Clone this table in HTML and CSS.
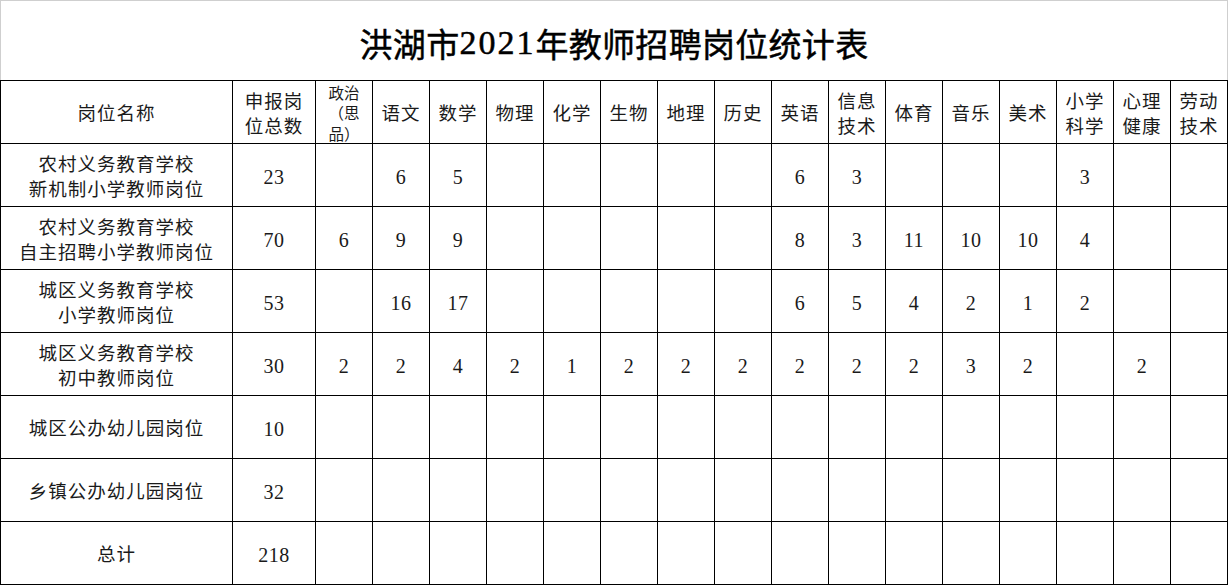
FILE: index.html
```html
<!DOCTYPE html>
<html lang="zh-CN">
<head>
<meta charset="utf-8">
<title>洪湖市2021年教师招聘岗位统计表</title>
<link rel="stylesheet" href="styles.css">
</head>
<body>
<div class="sheet">
  <div class="title">洪湖市<span class="num">2021</span>年教师招聘岗位统计表</div>
  <div class="grid">
    <div class="c">岗位名称</div>
    <div class="c">申报岗<br>位总数</div>
    <div class="c small"><span>政治</span><span>（思</span><span>品）</span></div>
    <div class="c">语文</div>
    <div class="c">数学</div>
    <div class="c">物理</div>
    <div class="c">化学</div>
    <div class="c">生物</div>
    <div class="c">地理</div>
    <div class="c">历史</div>
    <div class="c">英语</div>
    <div class="c">信息<br>技术</div>
    <div class="c">体育</div>
    <div class="c">音乐</div>
    <div class="c">美术</div>
    <div class="c">小学<br>科学</div>
    <div class="c">心理<br>健康</div>
    <div class="c">劳动<br>技术</div>

    <div class="c">农村义务教育学校<br>新机制小学教师岗位</div>
    <div class="c n">23</div><div class="c n"></div><div class="c n">6</div><div class="c n">5</div><div class="c n"></div><div class="c n"></div><div class="c n"></div><div class="c n"></div><div class="c n"></div><div class="c n">6</div><div class="c n">3</div><div class="c n"></div><div class="c n"></div><div class="c n"></div><div class="c n">3</div><div class="c n"></div><div class="c n"></div>

    <div class="c">农村义务教育学校<br>自主招聘小学教师岗位</div>
    <div class="c n">70</div><div class="c n">6</div><div class="c n">9</div><div class="c n">9</div><div class="c n"></div><div class="c n"></div><div class="c n"></div><div class="c n"></div><div class="c n"></div><div class="c n">8</div><div class="c n">3</div><div class="c n">11</div><div class="c n">10</div><div class="c n">10</div><div class="c n">4</div><div class="c n"></div><div class="c n"></div>

    <div class="c">城区义务教育学校<br>小学教师岗位</div>
    <div class="c n">53</div><div class="c n"></div><div class="c n">16</div><div class="c n">17</div><div class="c n"></div><div class="c n"></div><div class="c n"></div><div class="c n"></div><div class="c n"></div><div class="c n">6</div><div class="c n">5</div><div class="c n">4</div><div class="c n">2</div><div class="c n">1</div><div class="c n">2</div><div class="c n"></div><div class="c n"></div>

    <div class="c">城区义务教育学校<br>初中教师岗位</div>
    <div class="c n">30</div><div class="c n">2</div><div class="c n">2</div><div class="c n">4</div><div class="c n">2</div><div class="c n">1</div><div class="c n">2</div><div class="c n">2</div><div class="c n">2</div><div class="c n">2</div><div class="c n">2</div><div class="c n">2</div><div class="c n">3</div><div class="c n">2</div><div class="c n"></div><div class="c n">2</div><div class="c n"></div>

    <div class="c">城区公办幼儿园岗位</div>
    <div class="c n">10</div><div class="c n"></div><div class="c n"></div><div class="c n"></div><div class="c n"></div><div class="c n"></div><div class="c n"></div><div class="c n"></div><div class="c n"></div><div class="c n"></div><div class="c n"></div><div class="c n"></div><div class="c n"></div><div class="c n"></div><div class="c n"></div><div class="c n"></div><div class="c n"></div>

    <div class="c">乡镇公办幼儿园岗位</div>
    <div class="c n">32</div><div class="c n"></div><div class="c n"></div><div class="c n"></div><div class="c n"></div><div class="c n"></div><div class="c n"></div><div class="c n"></div><div class="c n"></div><div class="c n"></div><div class="c n"></div><div class="c n"></div><div class="c n"></div><div class="c n"></div><div class="c n"></div><div class="c n"></div><div class="c n"></div>

    <div class="c">总计</div>
    <div class="c n">218</div><div class="c n"></div><div class="c n"></div><div class="c n"></div><div class="c n"></div><div class="c n"></div><div class="c n"></div><div class="c n"></div><div class="c n"></div><div class="c n"></div><div class="c n"></div><div class="c n"></div><div class="c n"></div><div class="c n"></div><div class="c n"></div><div class="c n"></div><div class="c n"></div>
  </div>
</div>
</body>
</html>
```

FILE: styles.css
```css
html, body {
  margin: 0;
  padding: 0;
  background: #fff;
}
body {
  font-family: "Liberation Serif", "Noto Sans CJK SC", serif;
  color: #1a1a1a;
}
.sheet {
  width: 1228px;
  height: 585px;
  overflow: hidden;
}
.title {
  box-sizing: border-box;
  height: 80px;
  border-top: 1px solid #cfcfcf;
  border-left: 1px solid #cfcfcf;
  border-right: 1px solid #cfcfcf;
  display: flex;
  align-items: center;
  justify-content: center;
  padding-top: 5px;
  font-size: 33px;
  font-weight: 400;
  color: #000;
  letter-spacing: 0.3px;
  -webkit-text-stroke: 0.45px #000;
}
.title .num {
  font-size: 34px;
  letter-spacing: 2px;
  -webkit-text-stroke: 0.5px #000;
}
.grid {
  display: grid;
  grid-template-columns: 232px 83px repeat(16, 57px);
  grid-auto-rows: 63px;
  border-top: 1px solid #000;
  border-left: 1px solid #000;
}
.c {
  box-sizing: border-box;
  border-right: 1px solid #000;
  border-bottom: 1px solid #000;
  display: flex;
  align-items: center;
  justify-content: center;
  text-align: center;
  padding-top: 6px;
  font-size: 18.5px;
  line-height: 25.5px;
  letter-spacing: 1px;
}
.c.small {
  flex-direction: column;
  font-family: "Noto Sans CJK SC", sans-serif;
  font-size: 15.5px;
  line-height: 20.5px;
  letter-spacing: 0;
  padding-top: 1px;
}
.c.small span {
  display: block;
  height: 20.5px;
  overflow: hidden;
}
.c.n {
  font-size: 20px;
  letter-spacing: 0.5px;
}
```
